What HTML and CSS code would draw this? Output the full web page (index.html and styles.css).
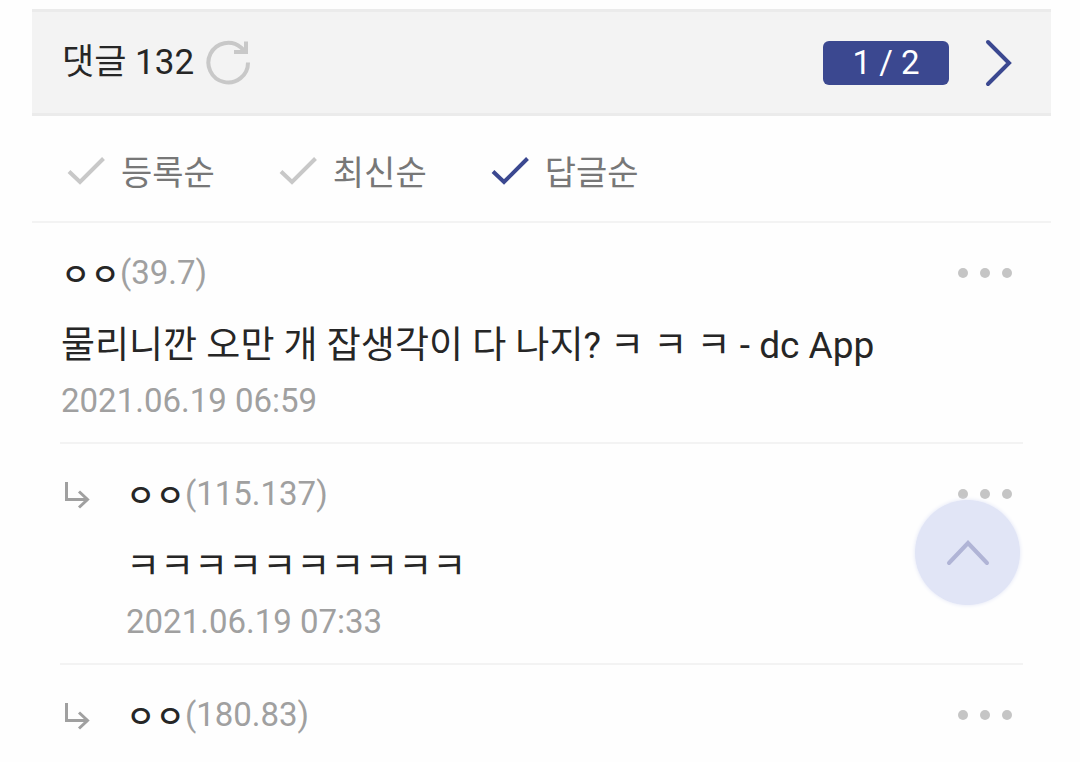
FILE: index.html
```
<!DOCTYPE html>
<html lang="ko">
<head>
<meta charset="utf-8">
<meta name="viewport" content="width=device-width, initial-scale=1">
<title>댓글</title>
<link rel="stylesheet" href="styles.css">
</head>
<body>
<section class="reply">
	<header class="reply-head">
		<h2 class="reply-title">댓글 132</h2>
		<button type="button" class="btn btn-reload" aria-label="새로고침">
			<svg width="46" height="46" viewBox="0 0 46 46"><path d="M42 22.5A19.8 19.8 0 1 1 35 7.5L39 11.5M40 1.5V12H28" /></svg>
		</button>
		<button type="button" class="btn btn-page">1 / 2</button>
		<button type="button" class="btn btn-next" aria-label="다음">
			<svg width="28" height="48" viewBox="0 0 28 48"><path d="M3 3L24 24L3 45" /></svg>
		</button>
	</header>

	<div class="sort">
		<button type="button" class="btn sort-item">
			<svg width="38" height="30" viewBox="0 0 38 30"><path d="M2 15.5L13 26L36.5 2.5" /></svg>등록순
		</button>
		<button type="button" class="btn sort-item">
			<svg width="38" height="30" viewBox="0 0 38 30"><path d="M2 15.5L13 26L36.5 2.5" /></svg>최신순
		</button>
		<button type="button" class="btn sort-item on">
			<svg width="38" height="30" viewBox="0 0 38 30"><path d="M2 15.5L13 26L36.5 2.5" /></svg>답글순
		</button>
	</div>

	<ul class="list">
		<li class="item">
			<div class="body">
				<div class="info">
					<span class="nick">ㅇㅇ</span><span class="ip">(39.7)</span>
					<button type="button" class="btn btn-more" aria-label="더보기"><i></i><i></i><i></i></button>
				</div>
				<p class="txt">물리니깐 오만 개 잡생각이 다 나지? ㅋ ㅋ ㅋ - dc App</p>
				<div class="date">2021.06.19 06:59</div>
			</div>
		</li>
		<li class="item">
			<svg class="arrow" width="26" height="28" viewBox="0 0 26 28"><path d="M2.5 0V17.5H24M15 9.5L23.5 17.5L15 25.5" /></svg>
			<div class="body">
				<div class="info">
					<span class="nick">ㅇㅇ</span><span class="ip">(115.137)</span>
					<button type="button" class="btn btn-more" aria-label="더보기"><i></i><i></i><i></i></button>
				</div>
				<p class="txt">ㅋㅋㅋㅋㅋㅋㅋㅋㅋㅋ</p>
				<div class="date">2021.06.19 07:33</div>
			</div>
		</li>
		<li class="item">
			<svg class="arrow" width="26" height="28" viewBox="0 0 26 28"><path d="M2.5 0V17.5H24M15 9.5L23.5 17.5L15 25.5" /></svg>
			<div class="body">
				<div class="info">
					<span class="nick">ㅇㅇ</span><span class="ip">(180.83)</span>
					<button type="button" class="btn btn-more" aria-label="더보기"><i></i><i></i><i></i></button>
				</div>
			</div>
		</li>
	</ul>
</section>

<button type="button" class="btn btn-top" aria-label="맨 위로">
	<svg width="44" height="26" viewBox="0 0 44 26"><path d="M3 23L22 3L41 23" /></svg>
</button>
</body>
</html>
```
FILE: styles.css
```
* { box-sizing: border-box; }
body {
	margin: 0;
	background: #fefefe;
	color: #262626;
	font-family: Roboto, "Noto Sans CJK KR", sans-serif;
}
h2, p, ul { margin: 0; padding: 0; font-weight: 400; }
svg { display: block; fill: none; stroke: currentColor; stroke-width: 4; }
.btn {
	padding: 0;
	border: 0;
	background: none;
	font: inherit;
	cursor: pointer;
}

.reply { margin: 9px 29px 0 32px; }

/* header */
.reply-head {
	display: flex;
	align-items: center;
	height: 107px;
	padding: 0 38px 0 30px;
	background: #f3f3f3;
	border-top: 3px solid #ebebeb;
	border-bottom: 3px solid #ebebeb;
}
.reply-title { font-size: 35px; line-height: 48px; }
.btn-reload { margin-left: 12px; color: #c8c8c8; }
.btn-page {
	width: 126px;
	height: 44px;
	margin-left: auto;
	border-radius: 6px;
	background: #3b4890;
	color: #fff;
	font-size: 33px;
	line-height: 44px;
}
.btn-next { margin-left: 36px; color: #3b4890; }
.btn-next svg, .btn-top svg { stroke-linecap: round; }

/* sort */
.sort {
	display: flex;
	gap: 64px;
	height: 107px;
	padding: 4px 35px 0;
	border-bottom: 2px solid #f3f3f3;
}
.sort-item {
	display: flex;
	align-items: center;
	gap: 16px;
	color: #777;
	font-size: 34px;
}
.sort-item svg { color: #c8c8c8; }
.sort-item.on svg { color: #3b4890; }

/* comments */
.list { margin: 0 28px; list-style: none; }
.item {
	display: flex;
	padding: 27px 0 20px;
	border-bottom: 2px solid #f3f3f3;
}
.item:last-child { border-bottom: 0; }
.body { flex: 1; padding-left: 1px; }
.arrow { margin: 11px 35px 0 4px; color: #a0a0a0; stroke-width: 3; }
.info {
	display: flex;
	align-items: center;
	height: 44px;
	font-size: 33px;
}
.nick { font-size: 32px; font-weight: 500; }
.ip { color: #a0a0a0; }
.btn-more {
	display: flex;
	gap: 12px;
	margin-left: auto;
	padding: 12px 11px 10px 0;
}
.btn-more i {
	width: 10px;
	height: 10px;
	border-radius: 50%;
	background: #c5c5c5;
}
.txt { margin-top: 22px; font-size: 37px; line-height: 60px; }
.date { margin-top: 3px; color: #a0a0a0; font-size: 33px; line-height: 43px; }

/* floating top button */
.btn-top {
	position: fixed;
	right: 60px;
	bottom: 157px;
	display: flex;
	align-items: center;
	justify-content: center;
	width: 105px;
	height: 105px;
	border-radius: 50%;
	background: #e1e5f6;
	box-shadow: 0 0 4px #e1e5f6;
	color: #b0b4d6;
}
```
